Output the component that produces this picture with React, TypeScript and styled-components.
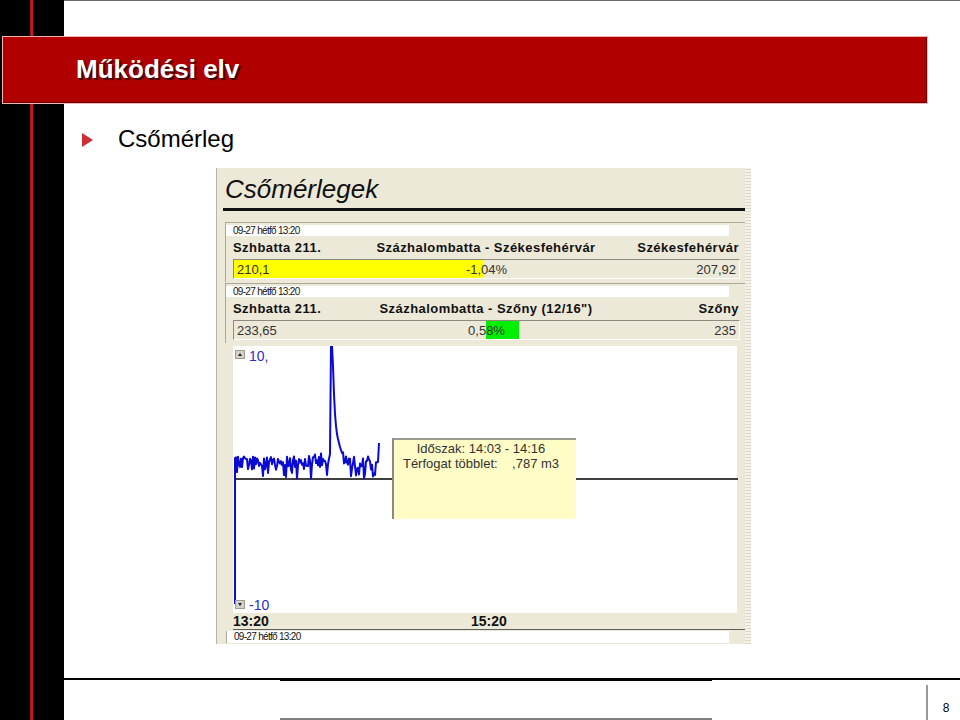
import styled, { createGlobalStyle } from "styled-components";

const GlobalStyle = createGlobalStyle`
  html, body {
    margin: 0;
    padding: 0;
    background: #ffffff;
  }
  * {
    box-sizing: border-box;
  }
`;

const Slide = styled.div`
  width: 960px;
  height: 720px;
  overflow: hidden;
  display: grid;
  grid-template-columns: 64px 1fr;
  grid-template-rows: 36px 68px 1fr 42px;
  font-family: "Liberation Sans", Arial, sans-serif;
  background: #fff;
`;

// black side band with the thin red stripe
const SideBand = styled.div`
  grid-column: 1;
  grid-row: 1 / 5;
  background: linear-gradient(
    90deg,
    #000 30px,
    #6e0c0c 30px,
    #c41a1a 31px,
    #c41a1a 33px,
    #6e0c0c 33px,
    #000 34px
  );
`;

const TopRule = styled.div`
  grid-column: 2;
  grid-row: 1;
  border-top: 1px solid #6a6a6a;
`;

const TitleBar = styled.div`
  grid-column: 1 / 3;
  grid-row: 2;
  z-index: 1;
  margin: 0 32px 0 2px;
  background: #b00000;
  border: 1px solid #f0b4b4;
  box-shadow: inset -1px -1px 0 #6c0000;
  display: flex;
  align-items: center;
  padding: 0 0 2px 73px;

  h1 {
    margin: 0;
    color: #fff;
    font-size: 26px;
    font-weight: 700;
    text-shadow: 2px 2px 1px #3a0000;
  }
`;

const Content = styled.div`
  grid-column: 2;
  grid-row: 3;
  padding-top: 21px;
  display: flex;
  flex-direction: column;
`;

const Bullet = styled.div`
  display: flex;
  align-items: center;
  padding-left: 18px;
  height: 28px;
  font-size: 24px;
  color: #000;

  &::before {
    content: "";
    width: 0;
    height: 0;
    border-left: 11px solid #cc2e33;
    border-top: 7px solid transparent;
    border-bottom: 7px solid transparent;
    margin-right: 25px;
    margin-top: 2px;
  }
`;

/* ---- embedded application screenshot ---- */

const Shot = styled.div`
  margin: 15px 0 0 152px;
  width: 535px;
  height: 476px;
  background: #ece9d8;
  border-left: 1px solid #b8b4a4;
  display: flex;
  font-family: "Liberation Sans", Arial, sans-serif;
`;

const ShotMain = styled.div`
  flex: 1;
  display: flex;
  flex-direction: column;
`;

const ScrollStrip = styled.div`
  width: 6px;
  background: repeating-linear-gradient(
    0deg,
    #dcd8ca 0 1px,
    #f4f2ea 1px 3px
  );
`;

const ShotTitle = styled.div`
  height: 40px;
  padding: 6px 0 0 8px;
  font-size: 26px;
  font-style: italic;
  line-height: 30px;
  color: #111;
`;

const TitleRule = styled.div`
  height: 3px;
  margin: 0 0 0 6px;
  background: #111;
`;

const Panel = styled.div<{ $top: number }>`
  margin: ${(p) => p.$top}px 0 0 8px;
  border-top: 1px solid #aca899;
  border-left: 1px solid #aca899;
  padding: 2px 0 3px 0;
  display: flex;
  flex-direction: column;
`;

const DateStrip = styled.div`
  height: 11px;
  margin-right: 16px;
  background: #fff;
  padding-left: 7px;
  font-size: 10px;
  line-height: 11px;
  letter-spacing: -0.7px;
  color: #111;
`;

const HeaderRow = styled.div`
  height: 22px;
  display: grid;
  grid-template-columns: 1fr auto 1fr;
  align-items: center;
  padding: 0 6px 0 7px;
  font-size: 13px;
  font-weight: 700;
  letter-spacing: 0.45px;
  color: #111;

  span:last-child {
    text-align: right;
  }
`;

const Field = styled.div<{ $fill: string; $from: number; $to: number }>`
  position: relative;
  height: 20px;
  margin: 1px 5px 0 7px;
  border-top: 1px solid #8d8a80;
  border-left: 1px solid #8d8a80;
  border-bottom: 1px solid #fff;
  border-right: 1px solid #fff;
  background: linear-gradient(
    90deg,
    transparent ${(p) => p.$from}px,
    ${(p) => p.$fill} ${(p) => p.$from}px,
    ${(p) => p.$fill} ${(p) => p.$to}px,
    transparent ${(p) => p.$to}px
  );
  display: grid;
  grid-template-columns: 1fr auto 1fr;
  align-items: center;
  padding: 0 3px 0 3px;
  font-size: 13px;
  color: #333;

  span:last-child {
    text-align: right;
  }
`;

const Chart = styled.div`
  position: relative;
  margin: 3px 8px 0 16px;
  height: 267px;
  background: #fff;
`;

const ScaleButton = styled.div<{ $up?: boolean }>`
  position: absolute;
  left: 2px;
  top: ${(p) => (p.$up ? 4 : 254)}px;
  width: 10px;
  height: 9px;
  background: #d4d0c8;
  border: 1px solid #a09c90;
  display: flex;
  align-items: center;
  justify-content: center;

  &::after {
    content: "";
    border-left: 2px solid transparent;
    border-right: 2px solid transparent;
    ${(p) =>
      p.$up ? "border-bottom: 3px solid #222;" : "border-top: 3px solid #222;"}
  }
`;

const ScaleLabel = styled.div<{ $top: number }>`
  position: absolute;
  left: 16px;
  top: ${(p) => p.$top}px;
  font-size: 14px;
  line-height: 16px;
  color: #2c2cc8;
`;

const Trace = styled.svg`
  display: block;
  position: absolute;
  left: 0;
  top: 0;
`;

const Tooltip = styled.div`
  position: absolute;
  left: 159px;
  top: 92px;
  width: 184px;
  height: 81px;
  background: #fffcc6;
  border-left: 2px solid #8a8a80;
  border-top: 2px solid #9a9a90;
  padding: 1px 8px 0 0;
  text-align: center;
  font-size: 13px;
  line-height: 15px;
  color: #333;
  white-space: pre;
`;

const AxisRow = styled.div`
  height: 16px;
  display: grid;
  grid-template-columns: 238px auto;
  padding-left: 16px;
  font-size: 14px;
  font-weight: 700;
  line-height: 16px;
  color: #111;
`;

const AxisRule = styled.div`
  height: 1px;
  margin: 0 0 0 16px;
  background: #5e5e5e;
`;

const BottomDate = styled(DateStrip)`
  margin: 1px 16px 0 9px;
  border-left: 1px solid #aca899;
  height: 12px;
`;

/* ---- footer ---- */

const Footer = styled.div`
  grid-column: 2;
  grid-row: 4;
  border-top: 2px solid #000;
  display: grid;
  grid-template-columns: 216px 432px 214px 1fr;
`;

const FooterCell = styled.div<{ $main?: boolean }>`
  ${(p) =>
    p.$main
      ? "border-top: 2px solid #000; border-bottom: 2px solid #808080; margin-top: -1px;"
      : ""}
`;

const PageNo = styled.div`
  margin-top: 5px;
  border-left: 2px solid #9a9a9a;
  display: flex;
  align-items: flex-end;
  justify-content: center;
  padding: 0 0 5px 4px;
  font-size: 12px;
  color: #000;
`;

// pseudo-random but stable data trace
function buildTrace(): string {
  let s = 12345;
  const r = () => {
    s = (s * 16807) % 2147483647;
    return s / 2147483647;
  };
  const pts: string[] = ["2,258", "2,112"];
  const decay: Record<number, number> = {
    97: 108, 98: 0, 99: 0, 100: 20, 101: 48, 102: 68, 103: 80,
    104: 88, 105: 93, 106: 97, 107: 101, 108: 104, 109: 107,
  };
  for (let x = 3; x <= 146; x++) {
    let y: number;
    if (decay[x] !== undefined) {
      y = decay[x];
    } else {
      const base = x > 109 && x < 116 ? 110 + (x - 109) : x > 80 && x < 97 ? 114 : 117;
      y = base + (r() - 0.5) * 14;
      if (r() < 0.1) y = base + 9 + r() * 7;
    }
    if (x === 146) y = 97;
    pts.push(`${x},${y.toFixed(1)}`);
  }
  return pts.join(" ");
}

const tracePoints = buildTrace();

export default function App() {
  return (
    <>
      <GlobalStyle />
      <Slide>
        <SideBand />
        <TopRule />
        <TitleBar>
          <h1>Működési elv</h1>
        </TitleBar>
        <Content>
          <Bullet>Csőmérleg</Bullet>
          <Shot>
            <ShotMain>
              <ShotTitle>Csőmérlegek</ShotTitle>
              <TitleRule />
              <Panel $top={11}>
                <DateStrip>09-27 hétfő 13:20</DateStrip>
                <HeaderRow>
                  <span>Szhbatta 211.</span>
                  <span>Százhalombatta - Székesfehérvár</span>
                  <span>Székesfehérvár</span>
                </HeaderRow>
                <Field $fill="#ffff00" $from={0} $to={250}>
                  <span>210,1</span>
                  <span>-1,04%</span>
                  <span>207,92</span>
                </Field>
              </Panel>
              <Panel $top={1}>
                <DateStrip>09-27 hétfő 13:20</DateStrip>
                <HeaderRow>
                  <span>Szhbatta 211.</span>
                  <span>Százhalombatta - Szőny (12/16")</span>
                  <span>Szőny</span>
                </HeaderRow>
                <Field $fill="#00ee00" $from={252} $to={285}>
                  <span>233,65</span>
                  <span>0,58%</span>
                  <span>235</span>
                </Field>
              </Panel>
              <Chart>
                <Trace width="505" height="267" viewBox="0 0 505 267">
                  <line x1="2" y1="133" x2="505" y2="133" stroke="#000" strokeWidth="1.5" />
                  <polyline
                    points={tracePoints}
                    fill="none"
                    stroke="#0a0ad2"
                    strokeWidth="2"
                    strokeLinejoin="round"
                  />
                </Trace>
                <ScaleButton $up />
                <ScaleLabel $top={2}>10,</ScaleLabel>
                <ScaleButton />
                <ScaleLabel $top={251}>-10</ScaleLabel>
                <Tooltip>{"Időszak: 14:03 - 14:16\nTérfogat többlet:    ,787 m3"}</Tooltip>
              </Chart>
              <AxisRow>
                <span>13:20</span>
                <span>15:20</span>
              </AxisRow>
              <AxisRule />
              <BottomDate>09-27 hétfő 13:20</BottomDate>
            </ShotMain>
            <ScrollStrip />
          </Shot>
        </Content>
        <Footer>
          <FooterCell />
          <FooterCell $main />
          <FooterCell />
          <PageNo>8</PageNo>
        </Footer>
      </Slide>
    </>
  );
}
